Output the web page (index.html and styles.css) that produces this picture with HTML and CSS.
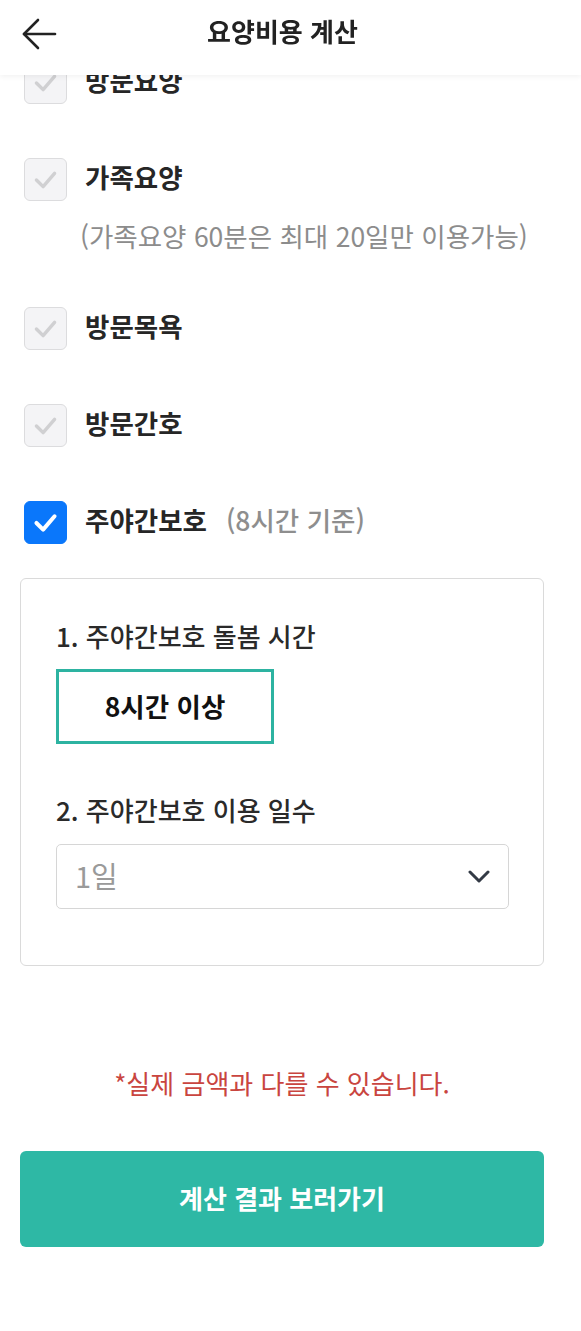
FILE: index.html
```html
<!DOCTYPE html>
<html lang="ko">
<head>
<meta charset="utf-8">
<title>요양비용 계산</title>
<link rel="stylesheet" href="styles.css">
</head>
<body>
<header class="topbar">
  <button class="back" aria-label="뒤로">
    <svg width="36" height="32" viewBox="0 0 36 32" fill="none" stroke="#222" stroke-width="2.6" stroke-linecap="round" stroke-linejoin="round">
      <path d="M3 16H34"/>
      <path d="M17 2L3 16L17 30"/>
    </svg>
  </button>
  <h1 class="title">요양비용 계산</h1>
</header>

<main class="content">
  <ul class="services">
    <li class="item">
      <span class="box"><svg class="tick" viewBox="0 0 43 43"><path d="M12 22L19 29L31 15"/></svg></span>
      <span class="label">방문요양</span>
    </li>
    <li class="item item-note">
      <div class="row">
        <span class="box"><svg class="tick" viewBox="0 0 43 43"><path d="M12 22L19 29L31 15"/></svg></span>
        <span class="label">가족요양</span>
      </div>
      <p class="note">(가족요양 60분은 최대 20일만 이용가능)</p>
    </li>
    <li class="item">
      <span class="box"><svg class="tick" viewBox="0 0 43 43"><path d="M12 22L19 29L31 15"/></svg></span>
      <span class="label">방문목욕</span>
    </li>
    <li class="item">
      <span class="box"><svg class="tick" viewBox="0 0 43 43"><path d="M12 22L19 29L31 15"/></svg></span>
      <span class="label">방문간호</span>
    </li>
    <li class="item">
      <span class="box box-on"><svg class="tick" viewBox="0 0 43 43"><path d="M12 22L19 29L31 15"/></svg></span>
      <span class="label">주야간보호</span>
      <span class="sub">(8시간 기준)</span>
    </li>
  </ul>

  <section class="card">
    <h2 class="q">1. 주야간보호 돌봄 시간</h2>
    <div class="option">8시간 이상</div>
    <h2 class="q q2">2. 주야간보호 이용 일수</h2>
    <div class="select">
      <span class="select-val">1일</span>
      <svg class="chev" width="22" height="14" viewBox="0 0 22 14" fill="none" stroke="#333a45" stroke-width="3" stroke-linecap="round" stroke-linejoin="round">
        <path d="M2 2L11 11L20 2"/>
      </svg>
    </div>
  </section>

  <p class="warn">*실제 금액과 다를 수 있습니다.</p>

  <button class="cta">계산 결과 보러가기</button>
</main>
</body>
</html>
```

FILE: styles.css
```css
* { box-sizing: border-box; }

html, body {
  margin: 0;
  padding: 0;
  background: #fff;
}

body {
  font-family: "Noto Sans CJK KR", "Noto Sans", sans-serif;
  color: #222;
}

.topbar {
  position: fixed;
  top: 0;
  left: 0;
  right: 0;
  height: 75px;
  background: #fff;
  box-shadow: 0 2px 5px rgba(0, 0, 0, 0.05);
  display: flex;
  align-items: center;
  justify-content: center;
  z-index: 10;
}

.back {
  position: absolute;
  left: 21px;
  top: 18px;
  border: 0;
  background: none;
  padding: 0;
  width: 36px;
  height: 32px;
  display: flex;
}

.title {
  margin: 0 16px 14px 0;
  font-size: 26px;
  font-weight: 700;
  line-height: 34px;
  color: #222;
}

.content {
  padding: 61px 37px 0 20px;
}

.services {
  list-style: none;
  margin: 0;
  padding: 0 0 0 4px;
  display: flex;
  flex-direction: column;
  gap: 54px;
}

.item, .row {
  display: flex;
  align-items: center;
  height: 43px;
}

.item-note {
  display: block;
  height: auto;
}

.box {
  width: 43px;
  height: 43px;
  flex: none;
  border: 1.5px solid #dcdcde;
  border-radius: 6px;
  background: #f4f4f6;
  display: flex;
}

.tick {
  width: 100%;
  height: 100%;
  fill: none;
  stroke: #d0d0d2;
  stroke-width: 3.6;
  stroke-linecap: round;
  stroke-linejoin: round;
}

.box-on {
  background: #0a77fb;
  border-color: #0a77fb;
}

.box-on .tick {
  stroke: #fff;
  stroke-width: 4.2;
}

.label {
  margin-left: 18px;
  padding-bottom: 6px;
  font-size: 26.5px;
  font-weight: 700;
  color: #262626;
  line-height: 34px;
}

.sub {
  margin-left: 19px;
  padding-bottom: 6px;
  font-size: 26.5px;
  font-weight: 500;
  color: #8e8e8e;
  line-height: 34px;
}

.note {
  margin: 18px 0 0 56px;
  font-size: 26.5px;
  line-height: 34px;
  color: #8c8c8c;
  white-space: nowrap;
}

.card {
  margin-top: 34px;
  border: 1.5px solid #dadada;
  border-radius: 6px;
  padding: 40px 34px 56px 35px;
}

.q {
  margin: 0;
  font-size: 26px;
  font-weight: 500;
  line-height: 34px;
  color: #2a2a2a;
}

.q2 {
  margin-top: 49px;
}

.option {
  margin-top: 16px;
  width: 218px;
  height: 75px;
  border: 3px solid #2db3a1;
  display: flex;
  align-items: center;
  justify-content: center;
  padding-bottom: 3px;
  font-size: 26.5px;
  font-weight: 700;
  color: #111;
}

.select {
  margin-top: 17px;
  height: 65px;
  border: 1.5px solid #d6d6d6;
  border-radius: 5px;
  display: flex;
  align-items: center;
  justify-content: space-between;
  padding: 0 18px 0 18px;
}

.select-val {
  font-size: 29px;
  color: #9a9a9a;
  line-height: 34px;
  padding-bottom: 4px;
}

.chev {
  flex: none;
}

.warn {
  margin: 100px 0 0 0;
  text-align: center;
  font-size: 26px;
  line-height: 34px;
  color: #c9453f;
}

.cta {
  margin-top: 51px;
  width: 100%;
  height: 96px;
  border: 0;
  border-radius: 6px;
  background: #2eb8a5;
  color: #fff;
  font-family: inherit;
  font-size: 26px;
  font-weight: 700;
  padding-bottom: 4px;
  display: block;
}
```
